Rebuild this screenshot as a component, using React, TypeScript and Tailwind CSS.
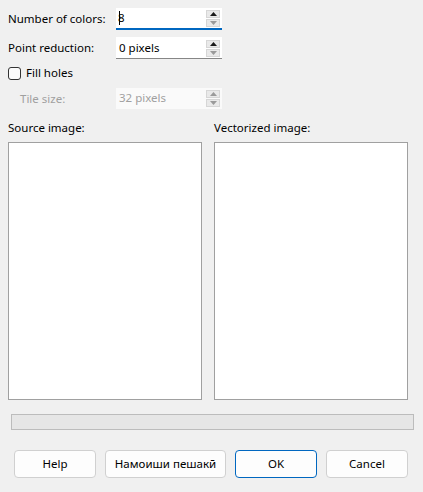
import React from 'react';

const font = { fontFamily: '"Noto Sans", "Open Sans", sans-serif' };

type SpinProps = {
  value: string;
  focused?: boolean;
  disabled?: boolean;
  upEnabled?: boolean;
  downEnabled?: boolean;
};

const Arrow: React.FC<{ up?: boolean; enabled: boolean }> = ({ up, enabled }) => (
  <div className="w-[14px] h-[8px] flex items-center justify-center bg-[#e9e9e9] border border-[#d6d6d6]">
    <svg width="7" height="4" viewBox="0 0 7 4">
      <path d={up ? 'M0 4 L3.5 0 L7 4 Z' : 'M0 0 L3.5 4 L7 0 Z'} fill={enabled ? '#1a1a1a' : '#9a9a9a'} />
    </svg>
  </div>
);

const SpinBox: React.FC<SpinProps> = ({ value, focused, disabled, upEnabled = true, downEnabled = false }) => (
  <div
    className={`w-[106px] h-[22px] flex items-center ${disabled ? 'bg-[#fafafa] border-b border-[#f0f0f0]' : 'bg-white'} ${
      focused ? 'border-b-2 border-[#0067c0]' : disabled ? '' : 'border-b border-[#868686]'
    }`}
  >
    <div className={`flex-1 flex items-center pl-[3px] ${disabled ? 'text-[#a0a0a0]' : 'text-black'}`}>
      {focused && <span className="inline-block w-px h-[14px] bg-black mr-[-2px]" />}
      <span>{value}</span>
    </div>
    <div className="flex flex-col gap-px mr-[2px] mt-[1px]">
      <Arrow up enabled={!disabled && upEnabled} />
      <Arrow enabled={!disabled && downEnabled} />
    </div>
  </div>
);

const Btn: React.FC<{ label: string; w: string; primary?: boolean }> = ({ label, w, primary }) => (
  <button
    className={`${w} h-[28px] rounded-[4px] bg-[#fdfdfd] text-black text-[11.5px] ${
      primary ? 'border border-[#0067c0]' : 'border border-[#d0d0d0]'
    }`}
    style={font}
  >
    {label}
  </button>
);

export default function App() {
  return (
    <div className="w-[423px] h-[492px] bg-[#f0f0f0] text-[11.5px] text-black pl-2 pt-2" style={font}>
      <div className="flex items-center h-[22px]">
        <div className="w-[108px]">Number of colors:</div>
        <SpinBox value="8" focused />
      </div>
      <div className="flex items-center h-[22px] mt-[7px]">
        <div className="w-[108px]">Point reduction:</div>
        <SpinBox value="0 pixels" />
      </div>
      <div className="flex items-center h-[14px] mt-[7px] gap-[5px]">
        <div className="w-[13px] h-[13px] rounded-[3px] border border-[#333333] bg-[#fbfbfb]" />
        <span>Fill holes</span>
      </div>
      <div className="flex items-center h-[21px] mt-[8px]">
        <div className="w-[108px] pl-3 text-[#a0a0a0]">Tile size:</div>
        <SpinBox value="32 pixels" disabled />
      </div>
      <div className="flex mt-[10px] gap-3">
        <div className="flex flex-col w-[194px]">
          <div className="h-[20px] mb-[3px]">Source image:</div>
          <div className="h-[258px] bg-white border border-[#a0a0a0]" />
        </div>
        <div className="flex flex-col w-[194px]">
          <div className="h-[20px] mb-[3px]">Vectorized image:</div>
          <div className="h-[258px] bg-white border border-[#a0a0a0]" />
        </div>
      </div>
      <div className="ml-[3px] mt-[14px] w-[403px] h-[16px] bg-[#e6e6e6] border border-[#bcbcbc]" />
      <div className="flex gap-[9px] ml-[6px] mt-[20px]">
        <Btn label="Help" w="w-[82px]" />
        <Btn label="Намоиши пешакӣ" w="w-[121px]" />
        <Btn label="OK" w="w-[82px]" primary />
        <Btn label="Cancel" w="w-[82px]" />
      </div>
    </div>
  );
}
